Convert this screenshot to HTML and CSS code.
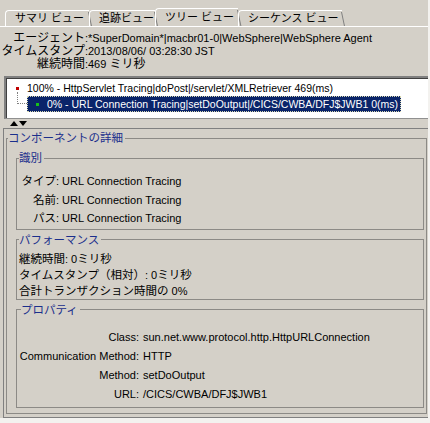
FILE: index.html
```html
<!DOCTYPE html>
<html lang="ja">
<head>
<meta charset="utf-8">
<link rel="stylesheet" href="styles.css">
</head>
<body>
<div class="app">
  <div class="tabs">
    <div class="tab t1">サマリ ビュー</div>
    <div class="tab t2">追跡ビュー</div>
    <div class="tab t3 active">ツリー ビュー</div>
    <div class="tab t4">シーケンス ビュー</div>
  </div>

  <div class="info">
    <div class="k"><span class="jh">エージェント</span>:</div><div class="v">*SuperDomain*|macbr01-0|WebSphere|WebSphere Agent</div>
    <div class="k"><span class="jh">タイムスタンプ</span>:</div><div class="v">2013/08/06/ 03:28:30 JST</div>
    <div class="k"><span class="jh">継続時間</span>:</div><div class="v">469 <span class="jh">ミリ秒</span></div>
  </div>

  <div class="tree">
    <div class="row">
      <span class="dot red"></span>
      <span class="label">100% - HttpServlet Tracing|doPost|/servlet/XMLRetriever 469(ms)</span>
    </div>
    <div class="row">
      <span class="elbow"></span>
      <span class="sel"><span class="dot green"></span><span class="label">0% - URL Connection Tracing|setDoOutput|/CICS/CWBA/DFJ$JWB1 0(ms)</span></span>
    </div>
  </div>

  <div class="splitter">
    <span class="arrow up"></span><span class="arrow down"></span>
  </div>

  <div class="details">
    <fieldset class="group outer">
      <legend><span class="j">コンポーネントの詳細</span></legend>

      <fieldset class="group ident">
        <legend><span class="j">識別</span></legend>
        <div class="kv kv-ident">
          <div class="k"><span class="j">タイプ</span>:</div><div>URL Connection Tracing</div>
          <div class="k"><span class="j">名前</span>:</div><div>URL Connection Tracing</div>
          <div class="k"><span class="j">パス</span>:</div><div>URL Connection Tracing</div>
        </div>
      </fieldset>

      <fieldset class="group perf">
        <legend><span class="j">パフォーマンス</span></legend>
        <div class="lines">
          <div><span class="j">継続時間</span>: 0<span class="j">ミリ秒</span></div>
          <div><span class="j">タイムスタンプ（相対）</span>: 0<span class="j">ミリ秒</span></div>
          <div><span class="j">合計トランザクション時間の</span> 0%</div>
        </div>
      </fieldset>

      <fieldset class="group props">
        <legend><span class="j">プロパティ</span></legend>
        <div class="kv kv-props">
          <div class="k">Class:</div><div>sun.net.www.protocol.http.HttpURLConnection</div>
          <div class="k">Communication Method:</div><div>HTTP</div>
          <div class="k">Method:</div><div>setDoOutput</div>
          <div class="k">URL:</div><div>/CICS/CWBA/DFJ$JWB1</div>
        </div>
      </fieldset>
    </fieldset>
  </div>
</div>
</body>
</html>
```

FILE: styles.css
```css
html, body {
  margin: 0;
  padding: 0;
  background: #f3f2ef;
}
body {
  font: 11px "Liberation Sans", "Noto Sans CJK JP", sans-serif;
  color: #000;
}
.app {
  width: 428px;
  height: 418px;
  background: #d4d0c8;
  display: flex;
  flex-direction: column;
  overflow: hidden;
}
.app > * { flex-shrink: 0; }

/* tabs */
.tabs {
  display: flex;
  align-items: flex-end;
  height: 26px;
  padding-left: 5px;
  border-bottom: 1px solid #fff;
}
.tab {
  position: relative;
  height: 15px;
  line-height: 15px;
  padding: 0 9px 0 9px;
  border-top: 1px solid #fff;
  border-left: 1px solid #fff;
  border-top-left-radius: 4px;
  font-size: 11px;
  white-space: nowrap;
}
.tab::after {
  content: "";
  position: absolute;
  top: 1px;
  right: 0;
  bottom: 0;
  width: 3px;
  border-right: 1px solid #808080;
  transform: skewX(12deg);
  transform-origin: top;
}
.tab.active {
  height: 17px;
  line-height: 17px;
}
.t1 { width: 65px; }
.t2 { width: 47px; }
.t3 { width: 64px; }
.t4 { width: 85px; }

/* info header */
.info {
  display: grid;
  grid-template-columns: 88px auto;
  padding: 5px 0;
  line-height: 13px;
  white-space: nowrap;
}
.info .k { text-align: right; }
.jh { font-size: 12px; }
.j { font-size: 11.5px; }

/* tree */
.tree {
  margin-left: 4px;
  background: #fff;
  border-top: 2px solid #808080;
  border-left: 2px solid #808080;
  border-bottom: 1px solid #909090;
  box-shadow: inset 1px 1px 0 #404040;
  padding: 2px 0 6px;
  font-size: 10.5px;
}
.row {
  display: flex;
  align-items: center;
  height: 16px;
  white-space: nowrap;
}
.dot {
  width: 3px;
  height: 3px;
  flex: none;
}
.red { background: #c00000; margin-left: 10px; margin-right: 8px; }
.green { background: #18c018; margin-right: 8px; }
.elbow {
  flex: none;
  align-self: flex-start;
  margin-left: 11px;
  margin-top: -4px;
  width: 9px;
  height: 11px;
  border-left: 1px dotted #808080;
  border-bottom: 1px dotted #808080;
}
.sel {
  display: flex;
  align-items: center;
  height: 16px;
  padding: 0 3px 0 9px;
  background: #0a246a;
  color: #fff;
  outline: 1px dotted #d8d8b0;
  outline-offset: -1px;
}

/* splitter */
.splitter {
  height: 9px;
  display: flex;
  align-items: center;
  padding-left: 10px;
  gap: 1px;
}
.arrow {
  width: 0;
  height: 0;
  border-left: 4.5px solid transparent;
  border-right: 4.5px solid transparent;
}
.up { border-bottom: 5px solid #000; }
.down { border-top: 5px solid #000; }

/* details */
.details {
  flex: 1 0 auto;
  margin-left: 3px;
  border-top: 1px solid #808080;
  border-left: 1px solid #808080;
  border-bottom: 1px solid #808080;
  padding: 2px 1px 2px 2px;
}
fieldset.group {
  margin: 0;
  min-width: 0;
  border: 1px solid #8c8a86;
}
fieldset.group > legend {
  padding: 0 2px 0 0;
  line-height: 14px;
  color: #1b2f8c;
}
.outer {
  padding: 0 2px 5px 9px;
}
.outer > legend { margin-left: -8px; }
.ident, .perf, .props {
  padding: 0 0 0 1px;
}
.ident > legend, .perf > legend { margin-left: 1px; }
.props > legend { margin-left: 3px; }
.ident { margin-top: 6px !important; padding-top: 7px; padding-bottom: 1px; }
.perf { margin-top: 3px !important; padding-top: 4px; }
.props { margin-top: 3px !important; padding-top: 11px; padding-bottom: 3px; }

.kv {
  display: grid;
  white-space: nowrap;
}
.kv .k { text-align: right; }
.kv-ident {
  grid-template-columns: 41px 1fr;
  column-gap: 3px;
  line-height: 18.5px;
}
.kv-props {
  grid-template-columns: 121px 1fr;
  column-gap: 4px;
  line-height: 19px;
}
.lines {
  padding-left: 1px;
  line-height: 16px;
  white-space: nowrap;
}
```
